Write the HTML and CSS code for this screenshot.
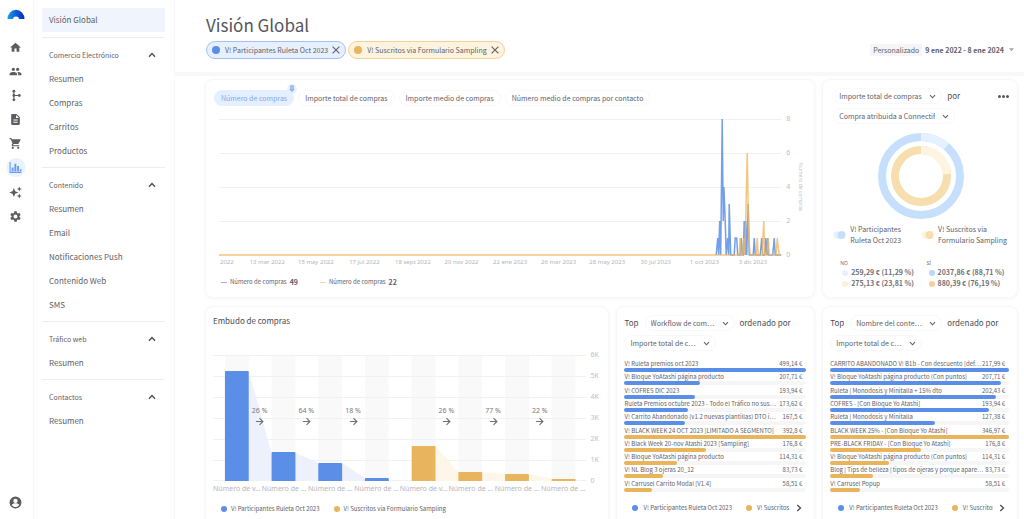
FILE: index.html
```html
<!DOCTYPE html>
<html lang="es">
<head>
<meta charset="utf-8">
<title>Visión Global</title>
<link rel="stylesheet" href="styles.css">
</head>
<body>
<svg class="defs" aria-hidden="true">
  <symbol id="chev" viewBox="0 0 8 6"><path d="M1 1.3 4 4.5 7 1.3" fill="none" stroke="currentColor" stroke-width="1.3"/></symbol>
  <symbol id="arrow" viewBox="0 0 10 10"><path d="M1 5H8.6M5 1.2 8.8 5 5 8.8" fill="none" stroke="currentColor" stroke-width="1.2"/></symbol>
  <symbol id="close" viewBox="0 0 8 8"><path d="M.6.6 7.4 7.4M7.4.6.6 7.4" fill="none" stroke="currentColor" stroke-width="1.1"/></symbol>
</svg>
<div class="app">
  <nav class="rail" aria-label="Principal">
    <a class="logo" href="#" aria-label="Inicio"><svg viewBox="0 0 18 11"><defs><linearGradient id="lg"><stop offset="0" stop-color="#12a5e8"/><stop offset=".5" stop-color="#0a5fd8"/><stop offset="1" stop-color="#0b2fc0"/></linearGradient></defs><path d="M.5 10A8.5 9.3 0 0 1 17.500 10H12.200A3.300 3.300 0 0 0 5.800 10Z" fill="url(#lg)"/></svg></a>
    <a class="rail-link" href="#" aria-label="Panel"><svg viewBox="0 0 24 24"><path d="M10 20v-6h4v6h5v-8h3L12 3 2 12h3v8z"/></svg></a>
    <a class="rail-link" href="#" aria-label="Contactos"><svg viewBox="0 0 24 24"><path d="M16 11c1.660 0 3-1.340 3-3s-1.340-3-3-3-3 1.340-3 3 1.340 3 3 3zm-8 0c1.660 0 3-1.340 3-3S9.660 5 8 5 5 6.340 5 8s1.340 3 3 3zm0 2c-2.330 0-7 1.170-7 3.500V19h14v-2.500C15 14.170 10.330 13 8 13zm8 0c-.3 0-.6 0-1 .05 1.200.84 2 1.970 2 3.450V19h6v-2.500c0-2.330-4.670-3.500-7-3.500z"/></svg></a>
    <a class="rail-link" href="#" aria-label="Workflows"><svg viewBox="0 0 24 24"><path d="M9 4.500V19.500M9 12H18" stroke="currentColor" stroke-width="2" fill="none"/><circle cx="9" cy="4" r="2.600"/><circle cx="9" cy="12" r="2.600"/><circle cx="9" cy="20" r="2.600"/><circle cx="19" cy="12" r="2.600"/></svg></a>
    <a class="rail-link" href="#" aria-label="Contenidos"><svg viewBox="0 0 24 24"><path d="M14 2H6c-1.100 0-2 .9-2 2v16c0 1.100.9 2 2 2h12c1.100 0 2-.9 2-2V8l-6-6zm2 16H8v-2h8v2zm0-4H8v-2h8v2zm-3-5V3.500L18.500 9H13z"/></svg></a>
    <a class="rail-link" href="#" aria-label="Tienda"><svg viewBox="0 0 24 24"><path d="M7 18c-1.100 0-2 .9-2 2s.9 2 2 2 2-.9 2-2-.9-2-2-2zM1 2v2h2l3.600 7.600-1.400 2.400c-.7 1.300.3 3 1.800 3h12v-2H7.400l1.100-2h7.500c.7 0 1.400-.4 1.700-1l3.600-6.500c.4-.7-.1-1.500-.9-1.500H5.200l-.9-2H1zm16 16c-1.100 0-2 .9-2 2s.9 2 2 2 2-.9 2-2-.9-2-2-2z"/></svg></a>
    <a class="rail-link rail-link--on" href="#" aria-label="Informes" aria-current="page"><svg viewBox="0 0 24 24"><path d="M1 2h2v18h20v2H1zM5 12h3.500v7H5zM10 5h3.500v14H10zM15 9h3.500v10H15zM20 15h3v4h-3z"/></svg></a>
    <a class="rail-link" href="#" aria-label="IA"><svg viewBox="0 0 24 24"><path d="M9 3.500 11.500 9.500 17.500 12 11.500 14.500 9 20.500 6.500 14.500.5 12 6.500 9.500zM19 1l1.300 3.200L23.500 5.500 20.300 6.800 19 10 17.700 6.800 14.500 5.500 17.700 4.200zM19 14l1.300 3.200 3.200 1.300-3.200 1.300L19 23l-1.300-3.200-3.200-1.300 3.200-1.300z"/></svg></a>
    <a class="rail-link" href="#" aria-label="Ajustes"><svg viewBox="0 0 24 24"><path d="M19.140 12.940c.04-.3.060-.61.060-.94 0-.32-.02-.64-.07-.94l2.030-1.580c.18-.14.230-.41.120-.61l-1.920-3.320c-.12-.22-.37-.29-.59-.22l-2.390.96c-.5-.38-1.030-.7-1.620-.94l-.36-2.540c-.04-.24-.24-.41-.48-.41h-3.840c-.24 0-.43.17-.47.41l-.36 2.540c-.59.24-1.130.57-1.620.94l-2.390-.96c-.22-.08-.47 0-.59.220L2.740 8.870c-.12.21-.08.47.12.610l2.030 1.580c-.05.3-.09.630-.09.940s.02.640.070.940l-2.030 1.580c-.18.14-.23.410-.12.610l1.920 3.320c.12.220.37.290.59.220l2.390-.96c.5.380 1.030.7 1.620.940l.36 2.540c.05.240.24.410.48.410h3.840c.24 0 .44-.17.470-.41l.36-2.540c.59-.24 1.130-.56 1.620-.94l2.390.96c.22.080.47 0 .59-.22l1.920-3.320c.12-.22.070-.47-.12-.61l-2.010-1.580zM12 15.600c-1.980 0-3.600-1.620-3.600-3.600s1.620-3.600 3.600-3.600 3.600 1.620 3.600 3.600-1.620 3.600-3.600 3.600z"/></svg></a>
    <a class="rail-link rail-user" href="#" aria-label="Cuenta"><svg viewBox="0 0 24 24"><path fill-rule="evenodd" d="M12 1a11 11 0 1 0 0 22 11 11 0 0 0 0-22zm0 4a4 4 0 1 1 0 8 4 4 0 0 1 0-8zm0 15.500c-3 0-5.500-1.500-7-3.800.5-2 4.500-3.200 7-3.200s6.500 1.200 7 3.200c-1.500 2.300-4 3.800-7 3.800z"/></svg></a>
  </nav>

  <aside class="side">
    <a class="side-top" href="#">Visión Global</a>
    <section class="group"><button class="group-head">Comercio Electrónico <svg><use href="#chev"/></svg></button><a href="#">Resumen</a><a href="#">Compras</a><a href="#">Carritos</a><a href="#">Productos</a></section>
    <section class="group"><button class="group-head">Contenido <svg><use href="#chev"/></svg></button><a href="#">Resumen</a><a href="#">Email</a><a href="#">Notificaciones Push</a><a href="#">Contenido Web</a><a href="#">SMS</a></section>
    <section class="group"><button class="group-head">Tráfico web <svg><use href="#chev"/></svg></button><a href="#">Resumen</a></section>
    <section class="group"><button class="group-head">Contactos <svg><use href="#chev"/></svg></button><a href="#">Resumen</a></section>
  </aside>

  <main class="main">
    <header class="head">
      <div>
        <h1>Visión Global</h1>
        <div class="chips">
          <span class="chip"><i class="dot"></i>V! Participantes Ruleta Oct 2023<button aria-label="Quitar"><svg><use href="#close"/></svg></button></span>
          <span class="chip chip--b"><i class="dot dot--b"></i>V! Suscritos via Formulario Sampling<button aria-label="Quitar"><svg><use href="#close"/></svg></button></span>
        </div>
      </div>
      <button class="range"><span>Personalizado</span><b>9 ene 2022 - 8 ene 2024</b><svg viewBox="0 0 6 4"><path d="M0 0H6L3 3.500Z"/></svg></button>
    </header>

    <div class="cards">
      <section class="card card--wide evo">
        <div class="tabs">
          <button class="tab tab--on">Número de compras<span class="pin"><svg viewBox="0 0 8 10"><path d="M2 .8H6M2.500 1V5L1.300 6.300H6.700L5.500 5V1M4 6.300V9.500" fill="#c5dafb" stroke="#6f97e8" stroke-width="1.100"/></svg></span></button>
          <button class="tab">Importe total de compras</button>
          <button class="tab">Importe medio de compras</button>
          <button class="tab">Número medio de compras por contacto</button>
        </div>
        <div class="evo-plot">
          <svg class="evo-svg" viewBox="0 0 562 136" preserveAspectRatio="none">
            <path class="grid" d="M0 .5H562M0 34.500H562M0 68.500H562M0 102.500H562"/>
            <path class="line" d="M497 136L498.500 119L499.500 136L500.500 102L501.500 136L503 0L504 102L504.700 68L506 102L507 136L508.500 119L509.500 136L510 85L511.500 136H515L516 119H517.500L518.500 136H521L522 119L523 136H524L525 102L526 136L526.500 102L527.500 136L529 85L530 136H534L535 119L536 136H541L542.500 119L543.500 136H545.500L546.500 119L547.500 136L548.500 119L549 136H553.500L555 119L556 136H562"/>
            <path class="line line--b" d="M0 136H520L521 119L522 136H523.500L524.500 119L525.500 136L526.500 102L528 34L529.500 119L531 136H537L538 119L539 136H543L544.500 102L545.500 136H547.500L549 119L550 136H557L558 119L560 136H562"/>
          </svg>
          <div class="scale"><span>8</span><span>6</span><span>4</span><span>2</span><span>0</span></div>
          <div class="axis-name">Número de compras</div>
        </div>
        <div class="evo-x"><span>2022</span><span>13 mar 2022</span><span>15 may 2022</span><span>17 jul 2022</span><span>18 sept 2022</span><span>20 nov 2022</span><span>22 ene 2023</span><span>26 mar 2023</span><span>28 may 2023</span><span>30 jul 2023</span><span>1 oct 2023</span><span>3 dic 2023</span></div>
        <div class="evo-legend"><span><i class="dash"></i>Número de compras <b>49</b></span><span><i class="dash dash--b"></i>Número de compras <b>22</b></span></div>
      </section>

      <section class="card donut-card">
        <div class="filters">
          <label class="pick"><select aria-label="Métrica"><option>Importe total de compras</option></select><svg><use href="#chev"/></svg></label>
          <span class="word">por</span>
          <button class="more" aria-label="Más opciones"><i></i><i></i><i></i></button>
        </div>
        <div class="filters"><label class="pick"><select aria-label="Dimensión"><option>Compra atribuida a Connectif</option></select><svg><use href="#chev"/></svg></label></div>
        <svg class="donut" viewBox="0 0 86 86">
          <g fill="none" stroke-width="8" transform="rotate(-90 43 43)">
            <circle cx="43" cy="43" r="39" stroke="#c6dffd"/>
            <circle cx="43" cy="43" r="39" stroke="#e4f2ff" pathLength="100" stroke-dasharray="11.290 100"/>
            <circle cx="43" cy="43" r="26" stroke="#f7deae"/>
            <circle cx="43" cy="43" r="26" stroke="#fdf4e1" pathLength="100" stroke-dasharray="23.810 100"/>
          </g>
        </svg>
        <div class="pairs pairs--names">
          <div class="name"><svg viewBox="0 0 13 8"><circle cx="4" cy="4" r="3.500" fill="#e4f2ff"/><circle cx="8.500" cy="4" r="4" fill="#c6dffd"/></svg><span>V! Participantes Ruleta Oct 2023</span></div>
          <div class="name"><svg viewBox="0 0 13 8"><circle cx="4" cy="4" r="3.500" fill="#fdf4e1"/><circle cx="8.500" cy="4" r="4" fill="#f7deae"/></svg><span>V! Suscritos via Formulario Sampling</span></div>
        </div>
        <div class="pairs pairs--values">
          <div><small>NO</small><p><i class="dot dot--l1"></i>259,29 € (11,29 %)</p><p><i class="dot dot--l2"></i>275,13 € (23,81 %)</p></div>
          <div><small>SÍ</small><p><i class="dot dot--l3"></i>2037,86 € (88,71 %)</p><p><i class="dot dot--l4"></i>880,39 € (76,19 %)</p></div>
        </div>
      </section>

      <section class="card funnel">
        <h2>Embudo de compras</h2>
        <div class="funnel-plot">
          <div class="funnel-area">
            <svg viewBox="0 0 376 126" preserveAspectRatio="none">
              <path fill="#f9f9fa" d="M12 0h24v126h-24zM59 0h24v126h-24zM106 0h24v126h-24zM153 0h24v126h-24zM200 0h24v126h-24zM247 0h24v126h-24zM294 0h24v126h-24zM341 0h24v126h-24z"/>
              <path class="grid" d="M0 .5H376M0 21.500H376M0 42.500H376M0 63.500H376M0 84.500H376M0 105.500H376M0 125.500H376"/>
              <path fill="#edf1fc" d="M36 16L59 98L83 98L106 108H130L153 123V126H36Z"/>
              <path fill="#fdf6e9" d="M224 91L247 117H271L294 119H318L341 124V126H224Z"/>
              <path fill="#5b8ee6" d="M12 126V17q0-1 1-1h22q1 0 1 1v109zM59 126V98q0-1 1-1h22q1 0 1 1v28zM106 126v-17q0-1 1-1h22q1 0 1 1v17zM153 126v-2q0-1 1-1h22q1 0 1 1v2z"/>
              <path fill="#e9b55c" d="M200 126V92q0-1 1-1h22q1 0 1 1v34zM247 126v-8q0-1 1-1h22q1 0 1 1v8zM294 126v-6q0-1 1-1h22q1 0 1 1v6zM341 126v-2h24v2z"/>
            </svg>
            <div class="steps">
              <span>26 %<svg><use href="#arrow"/></svg></span><span>64 %<svg><use href="#arrow"/></svg></span><span>18 %<svg><use href="#arrow"/></svg></span><span></span><span>26 %<svg><use href="#arrow"/></svg></span><span>77 %<svg><use href="#arrow"/></svg></span><span>22 %<svg><use href="#arrow"/></svg></span>
            </div>
          </div>
          <div class="scale"><span>6K</span><span>5K</span><span>4K</span><span>3K</span><span>2K</span><span>1K</span><span>0</span></div>
        </div>
        <div class="funnel-x"><span>Número de v…</span><span>Número de …</span><span>Número de …</span><span>Número de …</span><span>Número de v…</span><span>Número de …</span><span>Número de …</span><span>Número de …</span></div>
        <div class="legend"><span><i class="dot"></i>V! Participantes Ruleta Oct 2023</span><span><i class="dot dot--b"></i>V! Suscritos via Formulario Sampling</span></div>
      </section>

      <section class="card top">
        <div class="filters"><span class="word">Top</span><label class="pick"><select aria-label="Agrupación"><option>Workflow de com…</option></select><svg><use href="#chev"/></svg></label><span class="word">ordenado por</span></div>
        <div class="filters"><label class="pick"><select aria-label="Orden"><option>Importe total de c…</option></select><svg><use href="#chev"/></svg></label></div>
        <ol class="rank">
          <li><span>V! Ruleta premios oct 2023</span><em>499,14 €</em><div><i style="width:100%"></i></div></li>
          <li><span>V! Bloque YoAtashi página producto</span><em>207,71 €</em><div><i style="width:41.6%"></i></div></li>
          <li><span>V! COFRES DIC 2023</span><em>193,94 €</em><div><i style="width:38.9%"></i></div></li>
          <li><span>Ruleta Premios octubre 2023 - Todo el Tráfico no sus…</span><em>173,62 €</em><div><i style="width:34.8%"></i></div></li>
          <li><span>V! Carrito Abandonado (v1.2 nuevas plantillas) DTO i…</span><em>167,5 €</em><div><i style="width:33.5%"></i></div></li>
          <li class="b"><span>V! BLACK WEEK 24 OCT 2023 [LIMITADO A SEGMENTO]</span><em>392,8 €</em><div><i style="width:100%"></i></div></li>
          <li class="b"><span>V! Black Week 20-nov Atashi 2023 [Sampling]</span><em>176,8 €</em><div><i style="width:45%"></i></div></li>
          <li class="b"><span>V! Bloque YoAtashi página producto</span><em>114,31 €</em><div><i style="width:29.1%"></i></div></li>
          <li class="b"><span>V! NL Blog 3 ojeras 20_12</span><em>83,73 €</em><div><i style="width:21.3%"></i></div></li>
          <li class="b"><span>V! Carrusel Carrito Modal [V1.4]</span><em>58,51 €</em><div><i style="width:14.9%"></i></div></li>
        </ol>
        <div class="legend legend--cut"><span><i class="dot"></i>V! Participantes Ruleta Oct 2023</span><span><i class="dot dot--b"></i>V! Suscritos via Formulario Sampling</span><button aria-label="Siguiente"><svg><use href="#chev"/></svg></button></div>
      </section>

      <section class="card top">
        <div class="filters"><span class="word">Top</span><label class="pick"><select aria-label="Agrupación"><option>Nombre del conte…</option></select><svg><use href="#chev"/></svg></label><span class="word">ordenado por</span></div>
        <div class="filters"><label class="pick"><select aria-label="Orden"><option>Importe total de c…</option></select><svg><use href="#chev"/></svg></label></div>
        <ol class="rank">
          <li><span>CARRITO ABANDONADO V! B1b - Con descuento [def…</span><em>217,99 €</em><div><i style="width:100%"></i></div></li>
          <li><span>V! Bloque YoAtashi página producto (Con puntos)</span><em>207,71 €</em><div><i style="width:95.3%"></i></div></li>
          <li><span>Ruleta | Monodosis y Minitalla + 15% dto</span><em>202,43 €</em><div><i style="width:92.9%"></i></div></li>
          <li><span>COFRES - [Con Bloque Yo Atashi]</span><em>193,94 €</em><div><i style="width:89%"></i></div></li>
          <li><span>Ruleta | Monodosis y Minitalla</span><em>127,38 €</em><div><i style="width:58.4%"></i></div></li>
          <li class="b"><span>BLACK WEEK 25% - [Con Bloque Yo Atashi]</span><em>346,97 €</em><div><i style="width:100%"></i></div></li>
          <li class="b"><span>PRE-BLACK FRIDAY - [Con Bloque Yo Atashi]</span><em>176,8 €</em><div><i style="width:51%"></i></div></li>
          <li class="b"><span>V! Bloque YoAtashi página producto (Con puntos)</span><em>114,31 €</em><div><i style="width:33%"></i></div></li>
          <li class="b"><span>Blog | Tips de belleza | tipos de ojeras y porque apare…</span><em>83,73 €</em><div><i style="width:24.1%"></i></div></li>
          <li class="b"><span>V! Carrusel Popup</span><em>58,51 €</em><div><i style="width:16.9%"></i></div></li>
        </ol>
        <div class="legend legend--cut"><span><i class="dot"></i>V! Participantes Ruleta Oct 2023</span><span><i class="dot dot--b"></i>V! Suscritos via Formulario Sampling</span><button aria-label="Siguiente"><svg><use href="#chev"/></svg></button></div>
      </section>
    </div>
  </main>
</div>
</body>
</html>
```

FILE: styles.css
```css
* { box-sizing: border-box; }
body {
  margin: 0;
  font-family: "Noto Sans CJK SC", "Noto Sans", sans-serif;
  font-size: 7px;
  line-height: 10px;
  color: #606068;
  background: #fff;
}
a { color: inherit; text-decoration: none; }
button, select { font: inherit; color: inherit; background: none; border: 0; padding: 0; margin: 0; }
h1, h2, p, ol { margin: 0; padding: 0; }
h1, h2 { font-weight: 400; }
.defs { position: absolute; width: 0; height: 0; }
svg { display: block; flex: none; }

.app { display: flex; height: 100vh; overflow: hidden; }

.rail {
  width: 34px;
  flex: none;
  display: flex;
  flex-direction: column;
  align-items: center;
  padding: 6px 2px 5px 0;
  border-right: 1px solid #f7f7fb;
}
.logo { height: 29px; padding-top: 3px; }
.logo svg { width: 18px; height: 11px; }
.rail-link { width: 20px; height: 24px; display: grid; place-items: center; color: #5c5c63; }
.rail-link svg { width: 13px; height: 13px; fill: currentColor; }
.rail-link--on { color: #6b98ee; height: 25px; background: radial-gradient(circle, #eaf2fe 9px, transparent 10px); }
.rail-user { margin-top: auto; }

.side { width: 141px; flex: none; padding: 8px 9px 0 8px; border-right: 1px solid #f8f8fb; font-size: 8px; }
.side a, .group-head { display: flex; align-items: center; height: 24px; padding-left: 7px; width: 100%; }
.side .side-top { background: #f0f5fd; margin-bottom: 5px; }
.group { border-top: 1px solid #ebedf3; padding: 5px 0 4px; }
.group-head { justify-content: space-between; font-size: 7px; padding-right: 9px; }
.group-head svg { width: 8px; height: 6px; transform: rotate(180deg); color: #4a4a50; }

.main { flex: 1; min-width: 0; }
.head {
  display: flex;
  justify-content: space-between;
  height: 76px;
  padding: 13px 10px 0 31px;
  border-bottom: 4px solid #f8f8fa;
}
h1 { font-size: 17px; line-height: 24px; color: #55555c; }
.chips { display: flex; gap: 2px; margin-top: 4px; }
.chip { display: flex; align-items: center; height: 18px; padding: 0 5px; font-size: 7px; border: 1px solid #a3c1f3; border-radius: 9px; background: #e6f0fe; }
.chip--b { border-color: #f3d191; background: #fef3df; }
.chip .dot { width: 8px; height: 8px; margin-right: 5px; }
.chip button { margin-left: 4px; }
.chip svg { width: 8px; height: 8px; }
.dot { width: 6px; height: 6px; border-radius: 50%; background: #5b8ee6; flex: none; }
.dot--b { background: #e9b55c; }
.dot--l1 { background: #e4f2ff; }
.dot--l2 { background: #fdf0d4; }
.dot--l3 { background: #b7d7fc; }
.dot--l4 { background: #f3cf9a; }
.range { display: flex; align-items: center; align-self: flex-start; margin-top: 30px; gap: 3px; font-size: 7px; height: 13px; }
.range span { background: #f5f5f7; padding: 1px 3px; }
.range svg { width: 5px; height: 4px; margin-left: 2px; fill: #a2a2a8; }

.cards { display: grid; grid-template-columns: 405fr 199fr 196fr; gap: 8px 7px; padding: 3px 6px 0 30px; }
.card { min-width: 0; border-radius: 8px; border: 1px solid #f7f7f9; box-shadow: 0 1px 4px #0000000a; background: #fff; }
.card--wide { grid-column: span 2; }
.grid { fill: none; stroke: #f1f1f2; stroke-width: 1px; vector-effect: non-scaling-stroke; }
.scale { display: flex; flex-direction: column; justify-content: space-between; margin: -5px 0; font: 7px/10px "Noto Sans", sans-serif; color: #bdbdc0; }

.evo { padding: 10px 9px 10px 8px; }
.tabs { display: flex; gap: 4px; font-size: 7px; }
.tab { position: relative; height: 16px; padding: 0 6px; border: 1px solid #f9f9fa; border-radius: 8px; }
.tab--on { background: #e4f0ff; border-color: #e4f0ff; color: #86a5e8; }
.pin { position: absolute; top: -7px; right: -4px; width: 10px; height: 10px; border-radius: 50%; background: #eaf2fe; display: grid; place-items: center; }
.pin svg { width: 6px; height: 8px; }
.evo-plot { display: flex; height: 136px; margin: 13px 0 0 5px; }
.evo-svg { flex: 1; min-width: 0; width: 0; height: 100%; overflow: visible; }
.line { fill: none; stroke: #5b8ee6; stroke-opacity: .85; stroke-width: 1.500px; vector-effect: non-scaling-stroke; }
.line--b { stroke: #eeb860; stroke-opacity: .8; }
.evo .scale { margin-left: 5px; width: 9px; }
.axis-name { writing-mode: vertical-rl; font: 5px/8px "Noto Sans", sans-serif; color: #c2c2c6; text-align: center; width: 10px; }
.evo-x { display: flex; margin: 2px 28px 0 5px; font: 6px/10px "Noto Sans", sans-serif; color: #b5b5ba; white-space: nowrap; text-align: center; }
.evo-x span { flex: 1 1 0; }
.evo-x span:first-child { flex: 0 0 24px; text-align: left; padding-left: 1px; }
.evo-legend { display: flex; gap: 22px; margin: 10px 0 0 7px; font-size: 6px; }
.evo-legend span { display: flex; align-items: center; gap: 3px; }
.evo-legend b { font-size: 7px; }
.dash { width: 6px; height: 1px; background: #9fb0e6; }
.dash--b { background: #f3d7a8; }

.filters { display: flex; align-items: center; height: 20px; white-space: nowrap; }
.word { font-size: 8px; color: #4c4c53; }
.pick { display: flex; align-items: center; height: 16px; padding: 0 5px 0 5px; border: 1px solid #f9f9fa; border-radius: 8px; gap: 7px; }
.pick select { appearance: none; font-size: 7px; height: 14px; }
.pick svg { width: 7px; height: 5px; }
.pick + .word { margin-left: 5px; }
.more { margin-left: auto; display: flex; gap: 1px; }
.more i { width: 3px; height: 3px; border-radius: 50%; background: #55555c; }

.donut-card { padding: 6px 8px 0 10px; }
.donut { width: 86px; height: 86px; margin: 7px auto 5px; }
.pairs { display: grid; grid-template-columns: 1fr 1fr; }
.name { display: flex; align-items: center; gap: 4px; }
.name svg { width: 13px; height: 8px; }
.pairs--names { font-size: 7px; line-height: 11px; }
.pairs--values { margin-top: 13px; padding-left: 7px; column-gap: 4px; font-weight: 700; color: #707077; line-height: 11px; }
.pairs--values small { display: block; font: 5px/8px "Noto Sans", sans-serif; }
.pairs--values p { display: flex; align-items: center; gap: 3px; white-space: nowrap; }
.pairs--values .dot { margin-left: 2px; }

.funnel { padding: 8px 8px 0 7px; min-height: 260px; }
h2 { font-size: 8px; line-height: 12px; color: #4c4c53; }
.funnel-plot { display: flex; height: 126px; margin-top: 28px; }
.funnel-area { position: relative; flex: 1; }
.funnel-area > svg { width: 100%; height: 100%; }
.funnel .scale { margin-left: 4px; width: 10px; }
.steps { position: absolute; inset: 51px 6.250% auto; display: grid; grid-template-columns: repeat(7, 1fr); font: 7px/10px "Noto Sans", sans-serif; color: #77777c; text-align: center; }
.steps svg { width: 9px; height: 9px; margin: 1px auto 0; color: #6e6e74; }
.funnel-x { display: grid; grid-template-columns: repeat(8, 1fr); margin: 3px 14px 0 0; font: 7px/10px "Noto Sans", sans-serif; color: #b5b5ba; text-align: center; white-space: nowrap; }
.legend { display: flex; align-items: center; gap: 14px; font-size: 6px; margin: 10px 0 0 8px; white-space: nowrap; }
.legend span { display: flex; align-items: center; gap: 4px; }

.top { padding: 6px 8px 0 7px; }
.top .word + .pick { margin-left: 6px; }
.rank { list-style: none; display: grid; grid-auto-rows: 1fr; height: 133px; margin-top: 6px; }
.rank li { display: grid; grid-template-columns: 1fr auto; grid-template-rows: 9px 4px; line-height: 9px; font-size: 6px; white-space: nowrap; }
.rank span { overflow: hidden; min-width: 0; }
.rank em { font-style: normal; padding: 0 4px 0 1px; }
.rank div { grid-column: span 2; background: #f6f6f7; border-radius: 2px; }
.rank i { display: block; height: 4px; border-radius: 2px; background: #5b8ee6; }
.rank .b i { background: #e9b55c; }
.legend--cut span:nth-child(2) { overflow: hidden; flex: 1; }
.legend--cut { margin-top: 11px; gap: 14px; }
.legend--cut span { gap: 5px; }
.legend--cut button { margin: 0 3px 0 -9px; }
.legend--cut svg { width: 8px; height: 6px; transform: rotate(-90deg); color: #4a4a50; }
```
